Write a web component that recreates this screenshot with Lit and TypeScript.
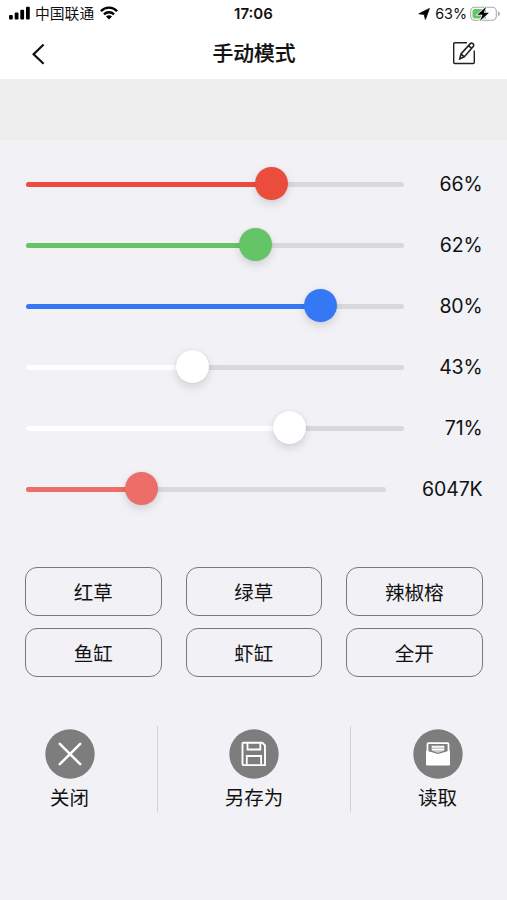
import { LitElement, html, css, svg } from "lit";
import { customElement, property } from "lit/decorators.js";
import { styleMap } from "lit/directives/style-map.js";

interface Channel {
  color: string;
  fill: number;
  value: string;
  track: number;
}

const CHANNELS: Channel[] = [
  { color: "#eb4d3d", fill: 245, value: "66%", track: 378 },
  { color: "#65c466", fill: 229, value: "62%", track: 378 },
  { color: "#3478f6", fill: 294, value: "80%", track: 378 },
  { color: "#ffffff", fill: 166, value: "43%", track: 378 },
  { color: "#ffffff", fill: 263.5, value: "71%", track: 378 },
  { color: "#ed6d68", fill: 115.5, value: "6047K", track: 360 },
];

const PRESETS = ["红草", "绿草", "辣椒榕", "鱼缸", "虾缸", "全开"];

@customElement("status-bar")
class StatusBar extends LitElement {
  static styles = css`
    :host {
      display: grid;
      grid-template-columns: 1fr auto 1fr;
      align-items: center;
      height: 26px;
      padding: 0 6px 1px 9px;
      font-size: 15px;
      color: #111;
    }
    svg { display: block; flex: none; }
    .side { display: flex; align-items: center; }
    .right { justify-content: flex-end; }
    .carrier { margin: 0 6px 0 5px; padding-top: 2px; font-size: 14.8px; line-height: 25px; }
    .signal, .wifi { margin-bottom: 1px; }
    .time { font-weight: 600; font-size: 15px; line-height: 26px; padding-top: 1px; margin-left: -3px; }
    .percent { margin: 0 3px 0 5px; padding-top: 1px; font-size: 14.3px; line-height: 26px; }
  `;
  render() {
    return html`
      <div class="side">
        <svg class="signal" width="21" height="14" viewBox="0 0 21 14">
          <rect x="0" y="9" width="3.8" height="4.5" rx="1" />
          <rect x="5.7" y="6.5" width="3.8" height="7" rx="1" />
          <rect x="11.3" y="3.8" width="3.8" height="9.7" rx="1" />
          <rect x="17" y="0.7" width="3.8" height="12.8" rx="1" />
        </svg>
        <span class="carrier">中国联通</span>
        <svg class="wifi" width="18" height="14" viewBox="0 0 18 14">
          <g fill="none" stroke="#000" stroke-width="2.4">
            <path d="M.9 5.1C5.4.5 12.6.5 17.1 5.1" />
            <path d="M4 8.3c2.8-2.8 7.2-2.8 10 0" />
          </g>
          <path d="M9 13.4 6 10.4c1.7-1.6 4.3-1.6 6 0z" />
        </svg>
      </div>
      <span class="time">17:06</span>
      <div class="side right">
        <svg width="12" height="12" viewBox="0 0 12 12"><path d="M.8 5.8 11.4.5 7.4 11.4 6.2 6.4z" stroke="#111" stroke-width=".9" stroke-linejoin="round" /></svg>
        <span class="percent">63%</span>
        <svg width="31" height="16" viewBox="0 0 31 16">
          <rect x=".7" y="1.2" width="25.6" height="13" rx="4" fill="#fff" stroke="#aaa" stroke-width="1.1" />
          <path d="M5 3h11v9.6H5a2.5 2.5 0 0 1-2.5-2.5V5.5A2.5 2.5 0 0 1 5 3z" fill="#65c466" />
          <path d="M28 5.4c2.6.5 2.6 4.2 0 4.7z" fill="#aaa" />
          <path d="M16.3.8 7.3 8.7h5.3l-2.7 6.3 9-8.2h-5.2z" stroke="#fff" stroke-width="1.4" paint-order="stroke" />
        </svg>
      </div>
    `;
  }
}

@customElement("nav-header")
class NavHeader extends LitElement {
  static styles = css`
    :host {
      display: grid;
      grid-template-columns: 1fr auto 1fr;
      align-items: center;
      height: 53px;
      padding: 0 30px 0 31px;
    }
    svg { display: block; }
    .title { margin: 0; padding-top: 1px; font-size: 20.8px; font-weight: 500; line-height: 50px; -webkit-text-stroke: 0.2px #111; }
    .edit { justify-self: end; margin-bottom: 2px; }
  `;
  render() {
    return html`
      <svg width="15" height="22" viewBox="0 0 15 22">
        <path d="M12.6 1.5 2.6 11.2l10 9.5" fill="none" stroke="#111" stroke-width="2.2" />
      </svg>
      <h1 class="title">手动模式</h1>
      <svg class="edit" width="25" height="24" viewBox="0 0 25 24" fill="none" stroke="#222" stroke-width="1.4">
        <path d="M15 1.7H2.7a1 1 0 0 0-1 1v18.800a1 1 0 0 0 1 1h18.600a1 1 0 0 0 1-1V9.500" />
        <path d="M7.8 17.8 9 12.9 18.3 2.6c1.600-1.500 4.500.8 3.100 2.700L12.200 15.900zM9 12.900l3.200 3M16.500 4.600l3.200 2.800" stroke-width="1.6" />
      </svg>
    `;
  }
}

@customElement("channel-slider")
class ChannelSlider extends LitElement {
  @property({ attribute: false }) channel!: Channel;
  static styles = css`
    :host {
      display: flex;
      align-items: center;
      justify-content: space-between;
      height: 61px;
    }
    .track {
      display: flex;
      align-items: center;
      height: 5px;
      margin-top: 1.5px;
      border-radius: 2.5px;
      background: #d8d8dd;
    }
    .fill { height: 5px; flex: none; border-radius: 2.5px 0 0 2.5px; }
    .knob {
      flex: none;
      width: 33px;
      height: 33px;
      margin: -2.5px 0 0 -16.5px;
      border-radius: 50%;
      box-shadow: 0 4px 10px rgba(0, 0, 0, 0.13), 0 0 2px rgba(0, 0, 0, 0.1);
    }
    .value { font-size: 19.5px; line-height: 24px; letter-spacing: -0.15px; }
  `;
  render() {
    const c = this.channel;
    return html`
      <div class="track" style=${styleMap({ width: `${c.track}px` })}>
        <div class="fill" style=${styleMap({ width: `${c.fill}px`, background: c.color })}></div>
        <div class="knob" style=${styleMap({ background: c.color })}></div>
      </div>
      <span class="value">${c.value}</span>
    `;
  }
}

const closeIcon = svg`<path d="M14.8 14.8 35.2 35.2M35.2 14.8 14.8 35.2" stroke-width="2.5" stroke-linecap="round" />`;
const saveIcon = svg`
  <path d="M14.5 13.7h18.700l2.800 2.800v19.600H14.500a1 1 0 0 1-1-1V14.700a1 1 0 0 1 1-1z" stroke-width="1.9" />
  <path d="M18.500 14v6.500h12.800v-6.500M17.800 35.500V27h14.300v8.500" stroke-width="1.8" />`;
const readIcon = svg`
  <path d="M14.5 24v-8.800a1 1 0 0 1 1-1h19a1 1 0 0 1 1 1V24" stroke-width="1.8" />
  <path d="M18.5 16.5h13v5l-6.500 2.500-6.500-2.500z" fill="#c9c9c9" stroke="none" />
  <path d="M19 17.9h12M19 20.600h12" stroke-width="1.3" />
  <path d="M13 21.500 25 25 37 21.500v14a1 1 0 0 1-1 1H14a1 1 0 0 1-1-1z" fill="#fff" stroke="none" />`;

@customElement("app-root")
class AppRoot extends LitElement {
  static styles = css`
    :host {
      display: flex;
      flex-direction: column;
      height: 900px;
      background: #f1f1f6;
      color: #111;
      font-family: Inter, "Noto Sans CJK SC", sans-serif;
    }
    .top { background: #fff; flex: none; height: 79px; }
    .band { flex: none; height: 61px; background: #eee; }
    .sliders { padding: 13px 24.5px 0 26.3px; }
    .presets {
      display: grid;
      grid-template-columns: repeat(3, 1fr);
      gap: 12px 24px;
      padding: 48.4px 24.5px 0 25px;
    }
    .preset {
      height: 49px;
      padding: 3px 0 0;
      border: 1px solid #77777b;
      border-radius: 12px;
      background: none;
      color: inherit;
      font: inherit;
      font-size: 19.5px;
      line-height: 44px;
    }
    .actions {
      display: grid;
      grid-template-columns: 124px 1px 192px 1px 123px;
      margin: 48.6px 33px 0;
    }
    .action { display: flex; flex-direction: column; align-items: center; width: 73px; padding-top: 3px; }
    .action:nth-child(3) { justify-self: center; }
    .action:last-child { justify-self: end; }
    .icon { display: block; width: 50px; height: 50px; fill: none; stroke: #fff; }
    .disc { fill: #7d7d7d; stroke: none; }
    .label { font-size: 19.5px; line-height: 28px; margin-top: 5px; white-space: nowrap; }
    .divider { width: 1px; height: 86px; background: #d3d3d7; }
  `;
  private action(label: string, icon: unknown) {
    return html`
      <div class="action">
        <svg class="icon" viewBox="0 0 50 50"><circle class="disc" cx="25" cy="25" r="24.7" />${icon}</svg>
        <span class="label">${label}</span>
      </div>
    `;
  }
  render() {
    return html`
      <header class="top"><status-bar></status-bar><nav-header></nav-header></header>
      <div class="band"></div>
      <section class="sliders">
        ${CHANNELS.map((c) => html`<channel-slider .channel=${c}></channel-slider>`)}
      </section>
      <section class="presets">
        ${PRESETS.map((p) => html`<button class="preset">${p}</button>`)}
      </section>
      <footer class="actions">
        ${this.action("关闭", closeIcon)}
        <div class="divider"></div>
        ${this.action("另存为", saveIcon)}
        <div class="divider"></div>
        ${this.action("读取", readIcon)}
      </footer>
    `;
  }
}
